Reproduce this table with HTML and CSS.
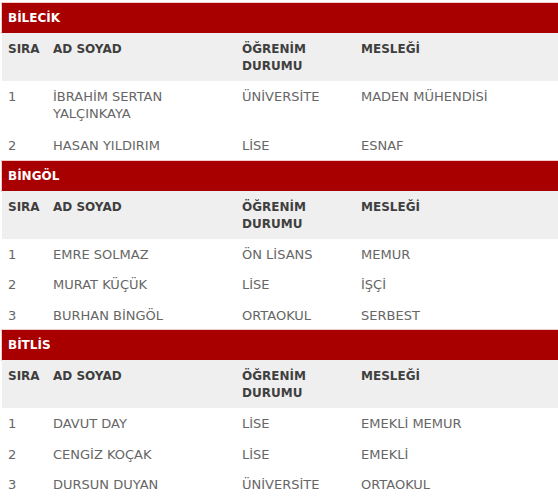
FILE: index.html
```html
<!DOCTYPE html>
<html lang="tr">
<head>
<meta charset="utf-8">
<link rel="stylesheet" href="styles.css">
</head>
<body>
<div class="page">
  <section class="block">
    <h2 class="city">BİLECİK</h2>
    <table class="list">
      <colgroup><col class="c1"><col class="c2"><col class="c3"><col class="c4"></colgroup>
      <thead><tr><th>SIRA</th><th>AD SOYAD</th><th>ÖĞRENİM<br>DURUMU</th><th>MESLEĞİ</th></tr></thead>
      <tbody>
        <tr class="tall"><td>1</td><td>İBRAHİM SERTAN<br>YALÇINKAYA</td><td>ÜNİVERSİTE</td><td>MADEN MÜHENDİSİ</td></tr>
        <tr><td>2</td><td>HASAN YILDIRIM</td><td>LİSE</td><td>ESNAF</td></tr>
      </tbody>
    </table>
  </section>
  <section class="block">
    <h2 class="city">BİNGÖL</h2>
    <table class="list">
      <colgroup><col class="c1"><col class="c2"><col class="c3"><col class="c4"></colgroup>
      <thead><tr><th>SIRA</th><th>AD SOYAD</th><th>ÖĞRENİM<br>DURUMU</th><th>MESLEĞİ</th></tr></thead>
      <tbody>
        <tr><td>1</td><td>EMRE SOLMAZ</td><td>ÖN LİSANS</td><td>MEMUR</td></tr>
        <tr><td>2</td><td>MURAT KÜÇÜK</td><td>LİSE</td><td>İŞÇİ</td></tr>
        <tr><td>3</td><td>BURHAN BİNGÖL</td><td>ORTAOKUL</td><td>SERBEST</td></tr>
      </tbody>
    </table>
  </section>
  <section class="block">
    <h2 class="city">BİTLİS</h2>
    <table class="list">
      <colgroup><col class="c1"><col class="c2"><col class="c3"><col class="c4"></colgroup>
      <thead><tr><th>SIRA</th><th>AD SOYAD</th><th>ÖĞRENİM<br>DURUMU</th><th>MESLEĞİ</th></tr></thead>
      <tbody>
        <tr><td>1</td><td>DAVUT DAY</td><td>LİSE</td><td>EMEKLİ MEMUR</td></tr>
        <tr><td>2</td><td>CENGİZ KOÇAK</td><td>LİSE</td><td>EMEKLİ</td></tr>
        <tr><td>3</td><td>DURSUN DUYAN</td><td>ÜNİVERSİTE</td><td>ORTAOKUL</td></tr>
      </tbody>
    </table>
  </section>
</div>
</body>
</html>
```

FILE: styles.css
```css
html, body {
  margin: 0;
  padding: 0;
  background: #ffffff;
}
.page {
  padding: 3px 0 0 2px;
  font-family: "DejaVu Sans", "Liberation Sans", sans-serif;
}
.block {
  margin: 0;
}
.city {
  margin: 0;
  height: 30px;
  line-height: 30px;
  padding: 0 6px;
  background: #a80000;
  color: #ffffff;
  font-size: 12px;
  font-weight: 700;
  box-sizing: border-box;
  box-shadow: 0 0 0 1px #f3caca;
}
.list {
  width: 556px;
  border-collapse: collapse;
  table-layout: fixed;
}
.c1 { width: 45px; }
.c2 { width: 189px; }
.c3 { width: 119px; }
.c4 { width: 203px; }
.list th {
  background: #efefef;
  color: #3f3f3f;
  font-weight: 700;
  font-size: 12px;
  line-height: 17px;
  text-align: left;
  vertical-align: top;
  padding: 8px 6px 6px;
  height: 34px;
}
.list td {
  color: #666666;
  font-size: 13px;
  line-height: 17px;
  vertical-align: top;
  padding: 7px 6px 6.5px;
}
.list tr.tall td {
  padding-bottom: 8px;
}
```
